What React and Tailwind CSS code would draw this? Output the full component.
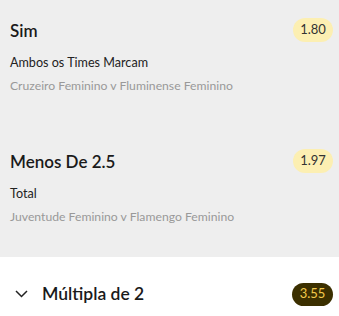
import React from 'react';

const selections = [
  {
    id: 1,
    name: 'Sim',
    market: 'Ambos os Times Marcam',
    event: 'Cruzeiro Feminino v Fluminense Feminino',
    odds: '1.80',
  },
  {
    id: 2,
    name: 'Menos De 2.5',
    market: 'Total',
    event: 'Juventude Feminino v Flamengo Feminino',
    odds: '1.97',
  },
];

const Selection = ({ sel, first }) => (
  <div className={first ? 'pl-[10px] pr-[6px] pt-[18px] pb-[37px]' : 'pl-[10px] pr-[6px] pt-[18px] pb-[32px]'}>
    <div className="flex items-center justify-between h-[24px]">
      <span className="text-[17px] font-semibold text-[#1a1a1a] leading-none">{sel.name}</span>
      <span className="h-[24px] w-[40px] rounded-full bg-[#fcefb2] flex items-center justify-center text-[13px] text-[#333]">
        {sel.odds}
      </span>
    </div>
    <div className="mt-[13px] text-[12.6px] leading-[16px] text-[#222]">{sel.market}</div>
    <div className="mt-[7px] text-[12.2px] leading-[16px] text-[#999]">{sel.event}</div>
  </div>
);

export default function App() {
  return (
    <div className="w-[339px] h-[316px] overflow-hidden bg-white" style={{ fontFamily: 'Lato, "Noto Sans", sans-serif' }}>
      <div className="bg-[#eeeeee]">
        {selections.map((sel, i) => (
          <Selection key={sel.id} sel={sel} first={i === 0} />
        ))}
      </div>
      <div className="flex items-center justify-between pl-[15px] pr-[6px] pt-[24px]">
        <div className="flex items-center gap-[14px]">
          <svg width="13" height="8" viewBox="0 0 13 8" fill="none" stroke="#222" strokeWidth="1.5">
            <path d="M1 1l5.5 5.5L12 1" />
          </svg>
          <span className="text-[17.5px] font-semibold text-[#1a1a1a]">Múltipla de 2</span>
        </div>
        <span className="h-[23px] w-[41px] rounded-full bg-[#3b2f00] flex items-center justify-center text-[13px] text-[#f2c94c]">
          3.55
        </span>
      </div>
    </div>
  );
}
